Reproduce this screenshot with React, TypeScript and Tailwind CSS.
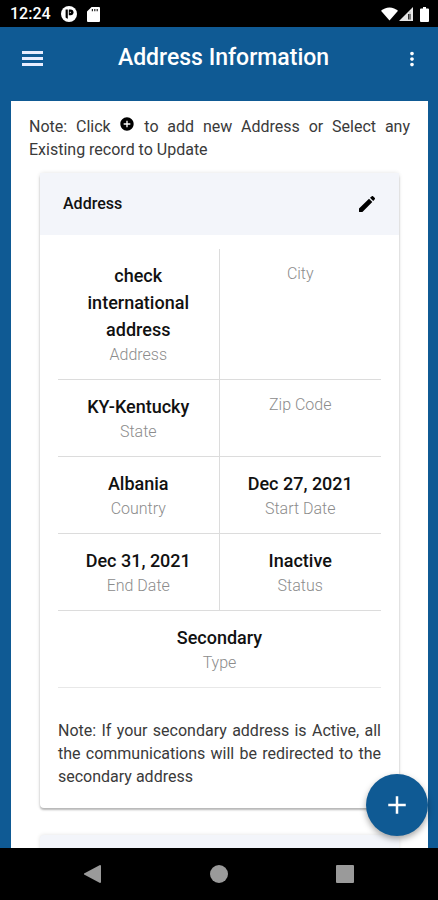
import React from 'react';
import { MdAdd, MdAddCircle, MdMoreVert } from 'react-icons/md';

interface Field {
  label: string;
  value?: string;
}

interface AddressCardProps {
  fields: Field[];
  type: string;
}

const addressFields: Field[] = [
  { label: 'Address', value: 'check international address' },
  { label: 'City' },
  { label: 'State', value: 'KY-Kentucky' },
  { label: 'Zip Code' },
  { label: 'Country', value: 'Albania' },
  { label: 'Start Date', value: 'Dec 27, 2021' },
  { label: 'End Date', value: 'Dec 31, 2021' },
  { label: 'Status', value: 'Inactive' },
];

const StatusBar: React.FC = () => (
  <div className="flex h-[27px] shrink-0 items-center bg-black pl-[10px] pr-[9px] pt-px text-white">
    <span className="w-10 text-base font-medium">12:24</span>
    <svg className="ml-[11px] h-4 w-4" viewBox="0 0 16 16">
      <circle cx="8" cy="8" r="8" fill="#fff" />
      <path d="M4.600 3.400h2.200v9.400a5 5 0 0 1-2.200-1.400z" fill="#000" />
      <path d="M7.800 3.400h1.800a2.900 2.900 0 0 1 0 5.800H7.800z" fill="#000" />
      <circle cx="9.300" cy="6.300" r="0.600" fill="#fff" />
    </svg>
    <svg className="ml-[10px] h-[15px] w-[13px]" viewBox="0 0 13 15">
      <path d="M4.600 0H12a1 1 0 0 1 1 1v13a1 1 0 0 1-1 1H1a1 1 0 0 1-1-1V4.600z" fill="#fff" />
      <path d="M5.400 2v2.200M7.800 2v2.200M10.200 2v2.200" stroke="#222" strokeWidth="1.200" />
    </svg>
    <svg className="ml-auto h-[14px] w-[17px]" viewBox="0 0 18 14">
      <path d="M0 3.600C2.400 1.400 5.500 0 9 0s6.600 1.400 9 3.600L9 14z" fill="#fff" />
    </svg>
    <svg className="ml-px h-[14px] w-[14px]" viewBox="0 0 14 14">
      <path d="M0 14 14 0v14z" fill="#e6e6e6" />
      <path d="M9 7h3v5.500H9z" fill="#333" />
      <path d="M11 4.500V13" stroke="#bbb" strokeWidth="1" />
    </svg>
    <svg className="ml-[7px] h-[15px] w-[9px]" viewBox="0 0 9 15">
      <path d="M3 0h3v1.500h2a1 1 0 0 1 1 1V14a1 1 0 0 1-1 1H1a1 1 0 0 1-1-1V2.500a1 1 0 0 1 1-1h2z" fill="#fff" />
    </svg>
  </div>
);

const Header: React.FC = () => (
  <header className="flex h-[63px] shrink-0 items-center justify-between pl-[18px] pr-[15px] text-white">
    <button type="button" aria-label="Menu" className="flex h-7 w-7 items-center justify-center">
      <svg className="h-[15px] w-[21px]" viewBox="0 0 21 15" fill="#e8edff">
        <path d="M0 0h21v3H0zM0 6h21v3H0zM0 12h21v3H0z" />
      </svg>
    </button>
    <h1 className="text-[23px] font-medium">Address Information</h1>
    <button type="button" aria-label="More options">
      <MdMoreVert size={22} />
    </button>
  </header>
);

const FieldCell: React.FC<Field> = ({ label, value }) => (
  <div className="flex flex-col-reverse justify-end px-4 pb-3 pt-[13px] text-center">
    <dt className="text-base font-light leading-6 text-[#8c8c8c]">{label}</dt>
    {value && <dd className="text-lg font-medium leading-[27px] text-[#111]">{value}</dd>}
  </div>
);

const AddressCard: React.FC<AddressCardProps> = ({ fields, type }) => (
  <section className="mx-[11px] rounded-sm bg-white shadow-[0_2px_2px_rgba(0,0,0,0.25),0_0_4px_rgba(0,0,0,0.12)]">
    <div className="flex h-[62px] items-center justify-between bg-[#f3f5fa] pl-[23px] pr-6">
      <h2 className="text-base font-medium text-[#111]">Address</h2>
      <button type="button" aria-label="Edit address">
        <svg className="h-4 w-4" viewBox="0 0 16 16">
          <path d="M0 12.600 10 2.700 13.300 6 3.400 16H.6a.6.6 0 0 1-.6-.6zM11 1.800 12.500.4a1.300 1.300 0 0 1 1.800 0l1.300 1.300a1.300 1.300 0 0 1 0 1.800L14.200 5z" />
        </svg>
      </button>
    </div>
    <div className="px-[18px] pb-5 pt-[14px]">
      <dl className="grid grid-cols-2">
        {fields.map((field, index) => (
          <div
            key={field.label}
            className={index % 2 === 0 ? 'border-b border-r border-[#dcdcdc]' : 'border-b border-[#dcdcdc]'}
          >
            <FieldCell {...field} />
          </div>
        ))}
        <div className="col-span-2 border-b border-[#e8e8e8]">
          <FieldCell label="Type" value={type} />
        </div>
      </dl>
      <p className="mt-[31px] text-justify text-base leading-[23px] text-[#3a3a3a]">
        Note: If your secondary address is Active, all the communications will be redirected to the
        secondary address
      </p>
    </div>
  </section>
);

const NavigationBar: React.FC = () => (
  <nav className="flex h-[52px] shrink-0 items-center justify-center gap-[108px] bg-black text-[#9a9a9a]">
    <button type="button" aria-label="Back">
      <svg className="h-[18px] w-[18px]" viewBox="0 0 18 18" fill="currentColor">
        <path d="M17 1v16a1 1 0 0 1-1 1L1 10a1 1 0 0 1 0-2L16 0a1 1 0 0 1 1 1z" />
      </svg>
    </button>
    <button type="button" aria-label="Home" className="h-[18px] w-[18px] rounded-full bg-current" />
    <button type="button" aria-label="Recent apps" className="h-[18px] w-[18px] rounded-[1px] bg-current" />
  </nav>
);

const App: React.FC = () => (
  <div className="flex h-screen flex-col bg-[#0f5a94] font-['Roboto',sans-serif]">
    <StatusBar />
    <Header />
    <div className="relative mt-[11px] flex min-h-0 flex-1 flex-col pl-[11px] pr-[10px]">
      <main className="flex-1 overflow-y-auto bg-white px-[18px] pt-[14px] [scrollbar-width:none]">
        <p className="mb-3 text-justify text-base leading-[23px] text-[#3a3a3a]">
          Note: Click <MdAddCircle className="inline align-baseline text-black" size={16} /> to add new
          Address or Select any Existing record to Update
        </p>
        <AddressCard fields={addressFields} type="Secondary" />
        {/* top of the next record */}
        <div className="mx-[11px] mt-[27px] h-[62px] rounded-sm bg-[#f3f5fa] shadow-[0_0_4px_rgba(0,0,0,0.12)]" />
      </main>
      <button
        type="button"
        aria-label="Add address"
        className="absolute bottom-3 right-[10px] flex h-[62px] w-[62px] items-center justify-center rounded-full bg-[#0f5a94] text-white shadow-[0_3px_6px_rgba(0,0,0,0.35)]"
      >
        <MdAdd size={30} />
      </button>
    </div>
    <NavigationBar />
  </div>
);

export default App;
